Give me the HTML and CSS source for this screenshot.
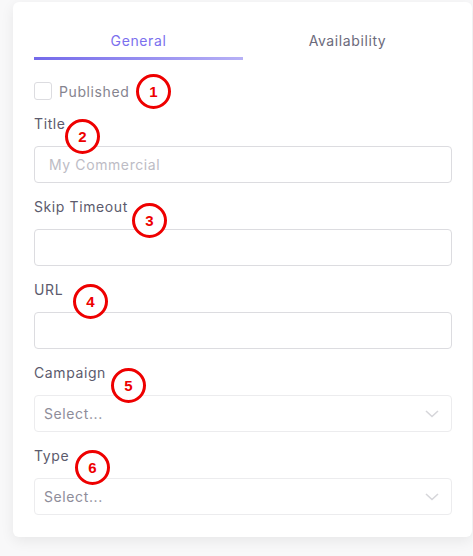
FILE: index.html
```html
<!DOCTYPE html>
<html>
<head>
<meta charset="utf-8">
<link rel="stylesheet" href="styles.css">
</head>
<body>
<div class="card">
  <div class="tabs">
    <div class="tab active">General</div>
    <div class="tab">Availability</div>
  </div>
  <div class="check-row">
    <span class="checkbox"></span>
    <span class="check-label">Published</span>
    <span class="badge b1">1</span>
  </div>
  <div class="field">
    <div class="label">Title</div>
    <span class="badge b2">2</span>
    <div class="input"><span class="placeholder">My Commercial</span></div>
  </div>
  <div class="field">
    <div class="label">Skip Timeout</div>
    <span class="badge b3">3</span>
    <div class="input"></div>
  </div>
  <div class="field">
    <div class="label">URL</div>
    <span class="badge b4">4</span>
    <div class="input"></div>
  </div>
  <div class="field">
    <div class="label">Campaign</div>
    <span class="badge b5">5</span>
    <div class="select"><span class="select-text">Select...</span>
      <svg class="chev" width="14" height="8" viewBox="0 0 14 8"><path d="M1 1 L7 6.5 L13 1" fill="none" stroke="#d6d6da" stroke-width="1.6"/></svg>
    </div>
  </div>
  <div class="field">
    <div class="label">Type</div>
    <span class="badge b6">6</span>
    <div class="select"><span class="select-text">Select...</span>
      <svg class="chev" width="14" height="8" viewBox="0 0 14 8"><path d="M1 1 L7 6.5 L13 1" fill="none" stroke="#d6d6da" stroke-width="1.6"/></svg>
    </div>
  </div>
</div>
</body>
</html>
```
FILE: styles.css
```css
html, body {
  margin: 0;
  padding: 0;
}
body {
  background: #f8f8f9;
  font-family: "Inter", "Open Sans", sans-serif;
  letter-spacing: 0.6px;
  width: 473px;
  height: 556px;
  overflow: hidden;
}
.card {
  margin: 2px 0 0 13px;
  width: 459px;
  box-sizing: border-box;
  background: #fff;
  border-radius: 6px;
  box-shadow: 0 4px 14px rgba(0,0,0,0.07);
  padding: 29px 20px 22px 21px;
}
.tabs {
  display: flex;
}
.tab {
  flex: 1;
  text-align: center;
  font-size: 14px;
  line-height: 20px;
  color: #6b6a7b;
  padding-bottom: 6px;
  border-bottom: 3px solid transparent;
}
.tab.active {
  color: #7b70ee;
  border-image: linear-gradient(to right, #7369ea, #b7b1f6) 1;
}
.check-row {
  position: relative;
  display: flex;
  align-items: center;
  margin-top: 22px;
  height: 18px;
}
.checkbox {
  width: 16px;
  height: 16px;
  border: 1px solid #dcdce0;
  border-radius: 3px;
}
.check-label {
  margin-left: 7px;
  font-size: 14px;
  color: #85848f;
}
.field {
  position: relative;
  margin-top: 14px;
}
.label {
  font-size: 14px;
  line-height: 20px;
  color: #5c5b6d;
  margin-bottom: 12px;
}
.input, .select {
  height: 37px;
  box-sizing: border-box;
  border: 1px solid #dcdce0;
  border-radius: 4px;
  display: flex;
  align-items: center;
}
.input { padding-left: 14px; }
.placeholder {
  font-size: 14px;
  color: #bdbcc5;
}
.select {
  border-color: #ececee;
  padding-left: 9px;
  padding-right: 12px;
  justify-content: space-between;
}
.select-text {
  font-size: 14px;
  color: #8e8d9a;
}
.badge {
  position: absolute;
  width: 35px;
  height: 35px;
  box-sizing: border-box;
  border: 3px solid #ee0000;
  border-radius: 50%;
  background: #fff;
  color: #ee0000;
  font-family: "Liberation Sans", Arial, sans-serif;
  font-weight: bold;
  font-size: 15px;
  letter-spacing: 0;
  display: flex;
  align-items: center;
  justify-content: center;
}
.b1 { left: 102px; top: -8px; }
.b2 { left: 31px; top: 5px; }
.b3 { left: 98px; top: 6px; }
.b4 { left: 39px; top: 4px; }
.b5 { left: 77px; top: 5px; }
.b6 { left: 41px; top: 4px; }
```
